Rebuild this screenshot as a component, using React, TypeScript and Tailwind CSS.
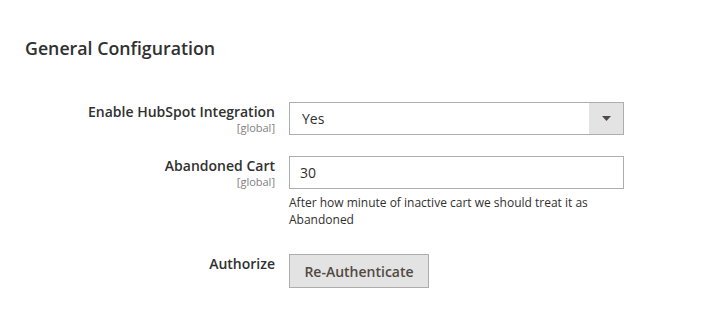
import React from "react";

export default function App() {
  const font = { fontFamily: '"Open Sans", "Noto Sans", sans-serif' };
  return (
    <div className="w-[721px] h-[312px] bg-white text-[#303030]" style={font}>
      <div className="pt-[36px] pl-[25px]">
        <h2 className="text-[17.75px] leading-[24px] font-semibold text-[#303030]">General Configuration</h2>
      </div>
      <div className="mt-[42px] flex flex-col">
        {/* Row 1 */}
        <div className="flex">
          <div className="w-[275px] flex flex-col items-end pt-[1px]">
            <span className="text-[14px] leading-[18px] font-semibold">Enable HubSpot Integration</span>
            <span className="text-[11px] leading-[14px] text-[#808080]">[global]</span>
          </div>
          <div className="ml-[14px] w-[335px] h-[33px] border border-[#adadad] flex items-stretch bg-white">
            <div className="flex-1 flex items-center pl-[12px] text-[14px]">Yes</div>
            <div className="w-[34px] bg-[#e3e3e3] flex items-center justify-center">
              <svg width="9" height="5" viewBox="0 0 9 5">
                <polygon points="0,0 9,0 4.5,5" fill="#514943" />
              </svg>
            </div>
          </div>
        </div>
        {/* Row 2 */}
        <div className="flex mt-[21px]">
          <div className="w-[275px] flex flex-col items-end pt-[1px]">
            <span className="text-[14px] leading-[18px] font-semibold">Abandoned Cart</span>
            <span className="text-[11px] leading-[14px] text-[#808080]">[global]</span>
          </div>
          <div className="ml-[14px] w-[335px] flex flex-col">
            <div className="h-[33px] border border-[#adadad] flex items-center pl-[10px] text-[14px]">30</div>
            <div className="mt-[5px] text-[12px] leading-[17px] text-[#303030] pr-[20px]">
              After how minute of inactive cart we should treat it as Abandoned
            </div>
          </div>
        </div>
        {/* Row 3 */}
        <div className="flex mt-[26px]">
          <div className="w-[275px] flex flex-col items-end pt-[1px]">
            <span className="text-[14px] leading-[18px] font-semibold">Authorize</span>
          </div>
          <div className="ml-[14px]">
            <button className="w-[140px] h-[34px] bg-[#e3e3e3] border border-[#adadad] text-[#514943] text-[14px] font-semibold flex items-center justify-center">
              Re-Authenticate
            </button>
          </div>
        </div>
      </div>
    </div>
  );
}
